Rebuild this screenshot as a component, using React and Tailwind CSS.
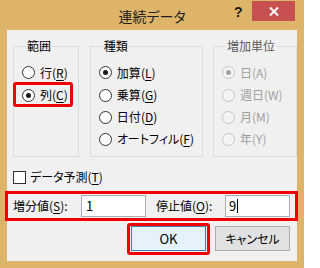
import React from 'react'

const FONT = { fontFamily: '"Meiryo UI", "Noto Sans CJK JP", "Noto Sans", sans-serif' }

function Radio({ checked, disabled }) {
  return (
    <span
      className={
        'w-[13px] h-[13px] rounded-full border flex items-center justify-center shrink-0 ' +
        (disabled ? 'border-[#c4c4c4] bg-[#f4f4f4]' : 'border-[#333333] bg-white')
      }
    >
      {checked && (
        <span className={'w-[5px] h-[5px] rounded-full ' + (disabled ? 'bg-[#a3a3a3]' : 'bg-[#1a1a1a]')} />
      )}
    </span>
  )
}

function Label({ text, accel }) {
  return (
    <span>
      {text}(<span className="underline underline-offset-2">{accel}</span>)
    </span>
  )
}

function RadioRow({ label, accel, checked, disabled, first, highlight }) {
  return (
    <div className={'relative flex items-center gap-[5px] whitespace-nowrap ' + (first ? 'h-[23px]' : 'h-[22px]')}>
      <Radio checked={checked} disabled={disabled} />
      <span className={'text-[12px] leading-4 ' + (disabled ? 'text-[#a0a0a0]' : 'text-black')}>
        {disabled ? label : <Label text={label} accel={accel} />}
      </span>
      {highlight && (
        <span className="absolute -left-[9px] -top-[2px] -bottom-[1px] w-[60px] border-[3px] border-[#f00000] rounded-[3px]" />
      )}
    </div>
  )
}

function Group({ title, width, muted, children }) {
  return (
    <fieldset className={'border border-[#dcdcdc] h-[119px] px-[8px] ' + width}>
      <legend className={'ml-[4px] px-[1px] text-[12px] leading-4 ' + (muted ? 'text-[#5a5a5a]' : 'text-black')}>
        {title}
      </legend>
      <div className="pt-[7px] flex flex-col">{children}</div>
    </fieldset>
  )
}

export default function App() {
  return (
    <div
      className="w-[304px] h-[268px] bg-[#ddb469] flex flex-col overflow-hidden [font-feature-settings:'palt']"
      style={FONT}
    >
      {/* Title bar */}
      <div className="relative h-[30px] shrink-0">
        <div className="w-full text-center text-[14px] leading-[30px] text-[#1e1e1e] pt-[1px]">連続データ</div>
        <span
          className="absolute left-[234px] top-[2px] text-[14px] font-bold text-[#1a1a1a]"
          style={{ fontFamily: '"Liberation Sans", sans-serif' }}
        >
          ?
        </span>
        <button className="absolute right-[9px] top-[1px] w-[43px] h-[20px] bg-[#c75050] flex items-center justify-center">
          <svg width="10" height="9" viewBox="0 0 10 9">
            <path d="M1 0.5 L9 8.5 M9 0.5 L1 8.5" stroke="white" strokeWidth="2" />
          </svg>
        </button>
      </div>

      {/* Client area */}
      <div className="mx-[7px] h-[231px] bg-[#f0f0f0] flex flex-col pt-[8px]">
        <div className="flex pl-[6px] gap-[11px]">
          <Group title="範囲" width="w-[67px]">
            <RadioRow first label="行" accel="R" />
            <RadioRow label="列" accel="C" checked highlight />
          </Group>
          <Group title="種類" width="w-[106px]">
            <RadioRow first label="加算" accel="L" checked />
            <RadioRow label="乗算" accel="G" />
            <RadioRow label="日付" accel="D" />
            <RadioRow label="オートフィル" accel="F" />
          </Group>
          <div className="ml-[-1px]">
            <Group title="増加単位" width="w-[84px]" muted>
              <RadioRow first label="日(A)" checked disabled />
              <RadioRow label="週日(W)" disabled />
              <RadioRow label="月(M)" disabled />
              <RadioRow label="年(Y)" disabled />
            </Group>
          </div>
        </div>

        {/* Trend checkbox */}
        <div className="mt-[10px] h-[20px] pl-[6px] flex items-center gap-[4px]">
          <span className="w-[13px] h-[13px] border border-[#333333] bg-white shrink-0" />
          <span className="text-[12px] leading-4 text-black whitespace-nowrap">
            データ予測(<span className="underline underline-offset-2">T</span>)
          </span>
        </div>

        {/* Step / stop values */}
        <div className="relative mt-[8px] h-[22px] pl-[6px] flex items-center text-[12px] text-black whitespace-nowrap">
          <span className="w-[68px]">
            増分値(<span className="underline underline-offset-2">S</span>):
          </span>
          <div className="w-[65px] h-[22px] border border-[#abadb3] bg-white pl-[4px] flex items-center text-[13px]">1</div>
          <span className="ml-[10px] w-[69px]">
            停止値(<span className="underline underline-offset-2">O</span>):
          </span>
          <div className="w-[65px] h-[22px] border border-[#abadb3] bg-white pl-[3px] flex items-center text-[13px]">
            9<span className="w-px h-[14px] bg-black ml-px" />
          </div>
          <span className="absolute -left-[2px] -right-[1px] -top-[4px] -bottom-[4px] border-[3px] border-[#f00000]" />
        </div>

        {/* Buttons */}
        <div className="mt-[9px] pr-[7px] flex justify-end gap-[9px]">
          <div className="relative">
            <button className="w-[75px] h-[25px] border border-[#3c7fb1] bg-[#e5f1fb] text-[13px] text-black flex items-center justify-center">
              OK
            </button>
            <span className="absolute -left-[4px] -right-[4px] -top-[3px] -bottom-[4px] border-[3px] border-[#f00000] rounded-[3px]" />
          </div>
          <button className="w-[75px] h-[25px] border border-[#adadad] bg-[#e1e1e1] text-[12px] text-black flex items-center justify-center">
            キャンセル
          </button>
        </div>
      </div>
    </div>
  )
}
